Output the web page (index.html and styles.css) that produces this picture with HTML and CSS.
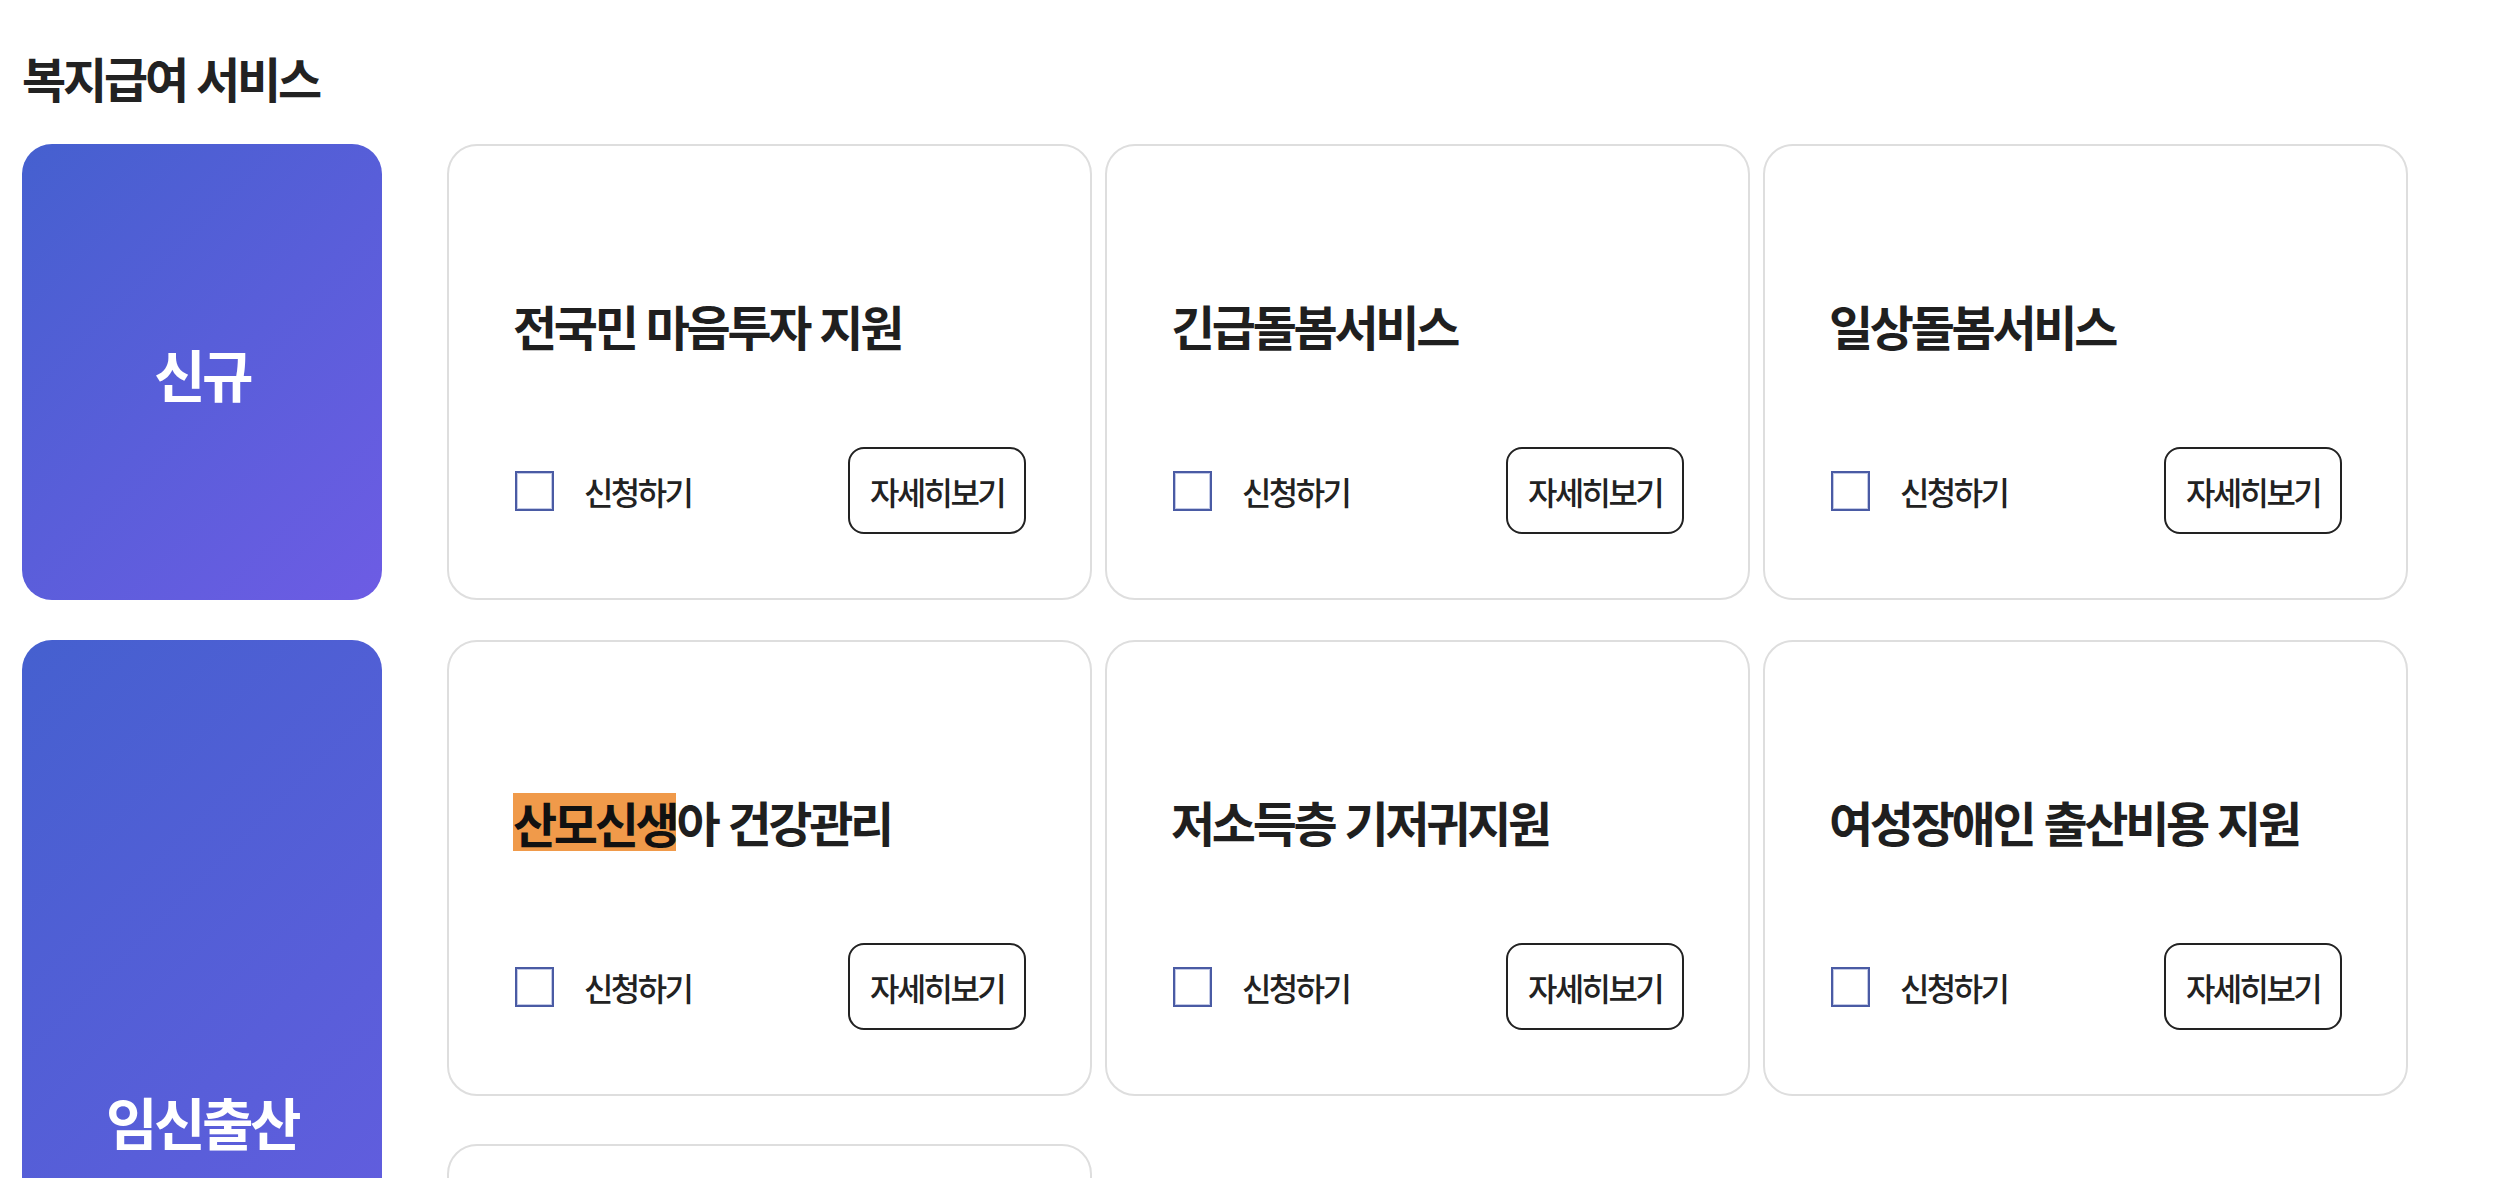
FILE: index.html
```
<!DOCTYPE html>
<html lang="ko">
<head>
  <meta charset="UTF-8">
  <title>복지급여 서비스</title>
  <link rel="stylesheet" href="styles.css">
</head>
<body>
  <h1 class="page-title">복지급여 서비스</h1>
  <div class="groups">
    <!-- 신규 -->
    <section class="group">
      <div class="group-label">신규</div>
      <div class="card-grid">
        <div class="card">
          <div class="card-title">전국민 마음투자 지원</div>
          <div class="card-footer">
            <label class="apply"><input type="checkbox" class="apply-check"> 신청하기</label>
            <button class="detail-btn">자세히보기</button>
          </div>
        </div>
        <div class="card">
          <div class="card-title">긴급돌봄서비스</div>
          <div class="card-footer">
            <label class="apply"><input type="checkbox" class="apply-check"> 신청하기</label>
            <button class="detail-btn">자세히보기</button>
          </div>
        </div>
        <div class="card">
          <div class="card-title">일상돌봄서비스</div>
          <div class="card-footer">
            <label class="apply"><input type="checkbox" class="apply-check"> 신청하기</label>
            <button class="detail-btn">자세히보기</button>
          </div>
        </div>
      </div>
    </section>
    <!-- 임신출산 -->
    <section class="group">
      <div class="group-label">임신출산</div>
      <div class="card-grid">
        <div class="card">
          <div class="card-title"><mark class="hl">산모신생</mark>아 건강관리</div>
          <div class="card-footer">
            <label class="apply"><input type="checkbox" class="apply-check"> 신청하기</label>
            <button class="detail-btn">자세히보기</button>
          </div>
        </div>
        <div class="card">
          <div class="card-title">저소득층 기저귀지원</div>
          <div class="card-footer">
            <label class="apply"><input type="checkbox" class="apply-check"> 신청하기</label>
            <button class="detail-btn">자세히보기</button>
          </div>
        </div>
        <div class="card">
          <div class="card-title">여성장애인 출산비용 지원</div>
          <div class="card-footer">
            <label class="apply"><input type="checkbox" class="apply-check"> 신청하기</label>
            <button class="detail-btn">자세히보기</button>
          </div>
        </div>
        <div class="card">
          <div class="card-title">첫만남이용권</div>
          <div class="card-footer">
            <label class="apply"><input type="checkbox" class="apply-check"> 신청하기</label>
            <button class="detail-btn">자세히보기</button>
          </div>
        </div>
      </div>
    </section>
  </div>
</body>
</html>
```

FILE: styles.css
```
body { margin: 0; padding: 0 22px; background: #fff; color: #222; font-family: "Noto Sans CJK KR", sans-serif; }
/* 상단 제목 */
.page-title { margin: 46px 0 36px; font-size: 48px; line-height: 62px; font-weight: 600; letter-spacing: -3.2px; color: #222; }
/* 그룹 */
.groups { display: flex; flex-direction: column; gap: 40px; }
.group { display: flex; align-items: stretch; gap: 65px; }
.group-label {
  width: 360px; flex-shrink: 0;
  display: flex; align-items: center; justify-content: center;
  border-radius: 30px; color: #fff;
  font-size: 56px; font-weight: 700; letter-spacing: -3.5px;
  background: linear-gradient(135deg, #4560cf 0%, #6d5ce4 100%);
}
.card-grid { display: grid; grid-template-columns: repeat(3, 645px); gap: 48px 13px; }
.card {
  height: 456px; box-sizing: border-box;
  border: 2px solid #dedede; border-radius: 30px; background: #fff;
  padding: 64px; display: flex; flex-direction: column;
}
.card-title {
  flex: 1; display: flex; align-items: center;
  font-size: 48px; line-height: 1.2; font-weight: 700; letter-spacing: -3.3px; color: #1f1f1f;
  padding-bottom: 6px;
}
.hl { display: inline-block; line-height: 58px; background: #f09a4a; color: #111; }
.card-footer { display: flex; align-items: center; justify-content: space-between; }
.apply { display: flex; align-items: center; gap: 30px; font-size: 32px; font-weight: 500; letter-spacing: -2.6px; color: #222; }
.apply-check {
  appearance: none; margin: 0 0 0 2px; width: 39px; height: 40px;
  border: 2px solid #4a5ba4; box-shadow: inset 0 0 0 1px #c3cae6; background: #fff;
}
.detail-btn {
  width: 178px; height: 87px; border: 2px solid #222; border-radius: 16px; background: #fff;
  font-family: inherit; font-size: 32px; font-weight: 500; letter-spacing: -2.6px; color: #222;
  padding: 0; cursor: pointer;
}
```
